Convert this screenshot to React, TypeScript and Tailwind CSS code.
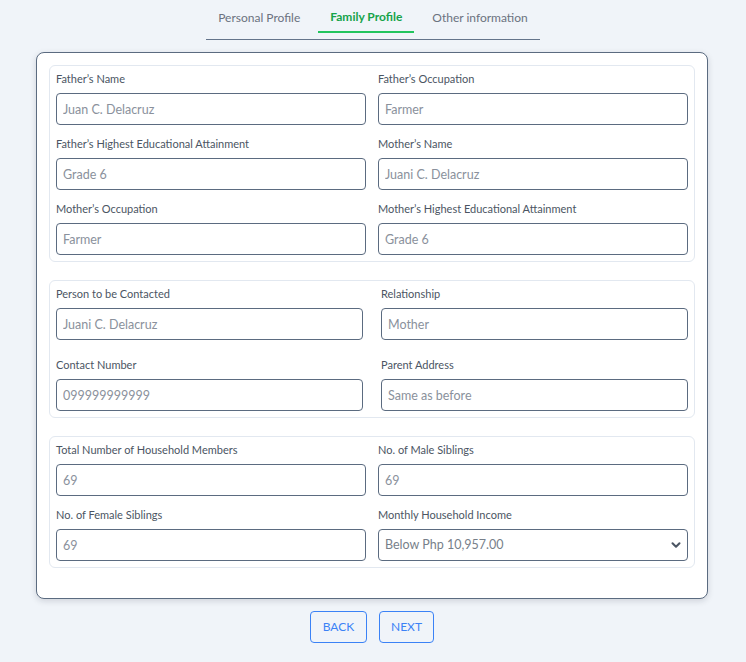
import { ChevronDown } from "lucide-react";

interface Field {
	label: string;
	value: string;
	select?: boolean;
}

const familyFields: Field[] = [
	{ label: "Father’s Name", value: "Juan C. Delacruz" },
	{ label: "Father’s Occupation", value: "Farmer" },
	{ label: "Father’s Highest Educational Attainment", value: "Grade 6" },
	{ label: "Mother’s Name", value: "Juani C. Delacruz" },
	{ label: "Mother’s Occupation", value: "Farmer" },
	{ label: "Mother’s Highest Educational Attainment", value: "Grade 6" },
];

const contactFields: Field[] = [
	{ label: "Person to be Contacted", value: "Juani C. Delacruz" },
	{ label: "Relationship", value: "Mother" },
	{ label: "Contact Number", value: "099999999999" },
	{ label: "Parent Address", value: "Same as before" },
];

const householdFields: Field[] = [
	{ label: "Total Number of Household Members", value: "69" },
	{ label: "No. of Male Siblings", value: "69" },
	{ label: "No. of Female Siblings", value: "69" },
	{ label: "Monthly Household Income", value: "Below Php 10,957.00", select: true },
];

function FieldBox({ field }: { field: Field }) {
	return (
		<div className="flex flex-col">
			<label className="text-[11px] leading-[16px] text-[#4b5563] mb-[6px]">{field.label}</label>
			{field.select ? (
				<div className="relative">
					<select
						defaultValue={field.value}
						className="w-full h-[32px] appearance-none rounded-[4px] border border-[#5b6b80] bg-white pl-[6px] pr-8 text-[12.5px] text-[#777f8a] outline-none"
					>
						<option>{field.value}</option>
					</select>
					<ChevronDown className="pointer-events-none absolute right-[5px] top-[9px] h-[14px] w-[14px] text-[#4b5563]" strokeWidth={3.5} />
				</div>
			) : (
				<input
					placeholder={field.value}
					className="w-full h-[32px] rounded-[4px] border border-[#5b6b80] bg-white px-[6px] text-[12.5px] placeholder:text-[#8a919c] outline-none"
				/>
			)}
		</div>
	);
}

function Section({ fields, colGap, rowGap }: { fields: Field[]; colGap: string; rowGap: string }) {
	return (
		<div className={`grid grid-cols-2 rounded-[6px] border border-[#e2e8f0] px-[6px] pt-[5px] pb-[6px] ${colGap} ${rowGap}`}>
			{fields.map((f) => (
				<FieldBox key={f.label} field={f} />
			))}
		</div>
	);
}

export default function App() {
	return (
		<div className="min-h-[662px] bg-[#f0f4f9] font-['Lato',sans-serif]">
			<div className="flex justify-center">
				<div className="flex gap-[6px] border-b border-[#64748b] pb-[6px]">
					<button className="px-[12px] h-[33px] pt-[2px] text-[12px] text-[#6b7280]">Personal Profile</button>
					<button className="px-[12px] h-[33px] pt-[2px] text-[12px] font-bold text-[#16a34a] border-b-2 border-[#22c55e]">
						Family Profile
					</button>
					<button className="px-[12px] h-[33px] pt-[2px] text-[12px] text-[#6b7280]">Other information</button>
				</div>
			</div>
			<div className="ml-[36px] w-[672px] mt-[12px] rounded-[8px] border border-[#5b6b80] bg-white px-[12px] pt-[12px] pb-[30px] shadow-[0_2px_6px_rgba(15,23,42,0.15)]">
				<Section fields={familyFields} colGap="gap-x-[12px]" rowGap="gap-y-[11px]" />
				<div className="mt-[18px]">
					<Section fields={contactFields} colGap="gap-x-[18px]" rowGap="gap-y-[17px]" />
				</div>
				<div className="mt-[18px]">
					<Section fields={householdFields} colGap="gap-x-[12px]" rowGap="gap-y-[11px]" />
				</div>
			</div>
			<div className="flex justify-center gap-[12px] mt-[12px] pb-[20px] pr-[2px]">
				<button className="h-[32px] w-[57px] rounded-[4px] border border-[#3b82f6] text-[12px] text-[#3b82f6]">BACK</button>
				<button className="h-[32px] w-[55px] rounded-[4px] border border-[#3b82f6] text-[12px] text-[#3b82f6]">NEXT</button>
			</div>
		</div>
	);
}
